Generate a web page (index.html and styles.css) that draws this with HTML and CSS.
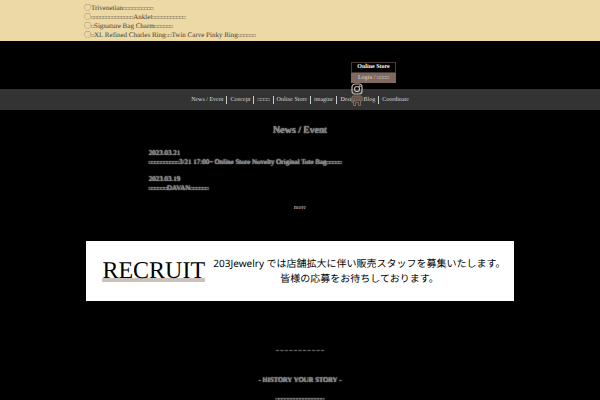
FILE: index.html
```html
<!DOCTYPE html>
<html lang="ja">
<head>
    <meta charset="UTF-8">
    <meta name="viewport" content="width=device-width, initial-scale=1.0">
    <title>203Jewelry</title>
    <link rel="stylesheet" href="styles.css">
</head>
<body>
    <div class="notice">
        <ul class="container">
            <li>◯Trivenetian<span class="box">□□□□□□□□□□</span></li>
            <li>◯<span class="box">□□□□□□□□□□□□□□</span>Anklet<span class="box">□□□□□□□□□□□</span></li>
            <li>◯<span class="box">□</span>Signature Bag Charm<span class="box">□□□□□□</span></li>
            <li>◯<span class="box">□</span>XL Refined Charles Ring<span class="box">□□</span>Twin Carve Pinky Ring<span class="box">□□□□□□</span></li>
        </ul>
    </div>

    <header class="header">
        <div class="shop">
            <a class="store" href="#">Online Store</a>
            <a class="login" href="#">Login / <span class="box">□□□□</span></a>
            <div class="social">
                <a href="#" aria-label="Instagram">
                    <svg width="12" height="12" viewBox="0 0 24 24" fill="none" stroke="#c9bbb5" stroke-width="2.4">
                        <rect x="2" y="2" width="20" height="20" rx="6"/>
                        <circle cx="12" cy="12" r="5"/>
                        <circle cx="17.5" cy="6.5" r=".6"/>
                    </svg>
                </a>
                <a href="#" aria-label="Shop">
                    <svg width="12" height="12" viewBox="0 0 24 24" fill="none" stroke="#80695f" stroke-width="2">
                        <path d="M3 2h18l2 7c0 4-5 4-5.500 0c0 4-5.500 4-5.500 0c0 4-5.500 4-5.500 0c0 4-5.500 4-5.500 0z" fill="#665650"/>
                        <path d="M5 12v9h4v-6h6v6h4v-9"/>
                    </svg>
                </a>
            </div>
        </div>
    </header>

    <nav class="nav">
        <a href="#">News / Event</a>
        <a href="#">Concept</a>
        <a href="#"><span class="box">□□□□</span></a>
        <a href="#">Online Store</a>
        <a href="#">imagine</a>
        <a href="#">Designer Blog</a>
        <a href="#">Coordinate</a>
    </nav>

    <main>
        <section class="news">
            <h1 class="outline">News / Event</h1>
            <dl class="outline">
                <dt>2023.03.21</dt>
                <dd><span class="box">□□□□□□□□□□</span>3/21 17:00~ Online Store Novelty Original Tote Bag<span class="box">□□□□□</span></dd>
                <dt>2023.03.19</dt>
                <dd><span class="box">□□□□□□</span>DAVAN<span class="box">□□□□□□</span></dd>
            </dl>
            <a class="more" href="#">more</a>
        </section>

        <a class="recruit container" href="#">
            <strong>RECRUIT</strong>
            <span class="message">203Jewelry では店舗拡大に伴い販売スタッフを募集いたします。<br>皆様の応募をお待ちしております。</span>
        </a>

        <section class="story outline">
            <p>– – – – – – – – – – –</p>
            <h2>- HISTORY YOUR STORY -</h2>
            <p class="box">□□□□□□□□□□□□□□□□</p>
        </section>
    </main>
</body>
</html>
```
FILE: styles.css
```css
* {
    box-sizing: border-box;
}

body {
    margin: 0;
    background-color: #000;
    color: #ddd;
    font-family: "Liberation Serif", "Noto Sans CJK JP", serif;
    font-size: 6px;
    line-height: 9px;
    text-rendering: geometricPrecision;
}

a {
    color: inherit;
    text-decoration: none;
}

h1, h2, p, ul, dl, dd {
    margin: 0;
    padding: 0;
}

.container {
    width: 71.2%;
    margin: 0 auto;
}

.box {
    font-size: 5px;
    line-height: 5px;
}

.notice {
    padding: 4px 0 1px;
    background-color: #ecd9a6;
    color: #4a4232;
}

.notice ul {
    list-style: none;
    width: 72%;
    font-size: 7px;
}

.header {
    display: flex;
    justify-content: flex-end;
    height: 48px;
    padding: 21px 34% 0 0;
}

.shop {
    width: 45px;
    text-align: center;
}

.store, .login {
    display: block;
    border: 1px solid #80695f;
    line-height: 9px;
}

.store {
    border-color: #443a36;
    color: #fff;
    font-weight: bold;
}

.login {
    line-height: 8px;
    background-color: #80695f;
}

.social {
    position: relative;
    z-index: 1;
    width: 12px;
}

.social a, .social svg {
    display: block;
}

.nav {
    display: flex;
    justify-content: center;
    align-items: center;
    height: 21px;
    background-color: #333;
}

.nav a {
    padding: 0 3px;
    line-height: 8px;
}

.nav a + a {
    border-left: 1px solid #ccc;
}

.outline {
    color: #555;
    text-shadow: 0 0 1px #fff, 0 0 1px #fff;
}

.news {
    padding-top: 14px;
    text-align: center;
}

.news h1 {
    font-size: 10px;
    font-weight: normal;
    line-height: 14px;
}

.news dl {
    width: 50.4%;
    margin: 11px auto 0;
    font-size: 7px;
    text-align: left;
}

.news dd {
    margin-bottom: 8px;
}

.more {
    display: block;
    margin-top: 11px;
}

.recruit {
    display: flex;
    align-items: center;
    justify-content: space-between;
    height: 60px;
    margin-top: 28px;
    padding: 0 8px 0 16px;
    background-color: #fff;
    color: #000;
}

.recruit strong {
    background: linear-gradient(transparent 80%, #cbc2bc 80%);
    font-size: 24px;
    font-weight: normal;
    line-height: 22px;
}

.message {
    font-family: "Noto Sans", "Noto Sans CJK JP", sans-serif;
    font-size: 10px;
    line-height: 15px;
    text-align: center;
    white-space: nowrap;
}

.story {
    padding-top: 46px;
    text-align: center;
}

.story h2 {
    margin: 20px 0 13px;
    font-size: 7px;
    font-weight: normal;
    line-height: 9px;
}
```
